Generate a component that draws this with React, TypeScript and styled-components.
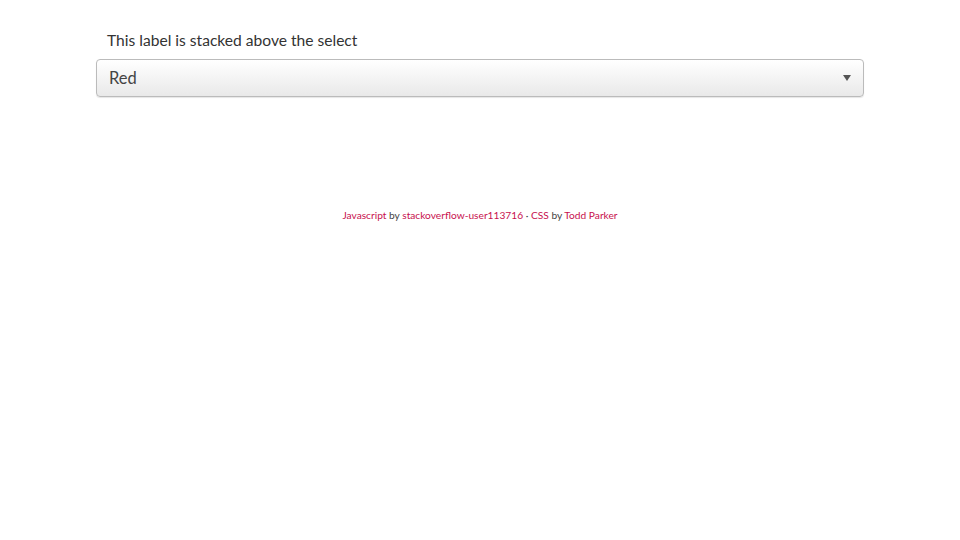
import React from "react";
import styled, { createGlobalStyle } from "styled-components";

const GlobalStyle = createGlobalStyle`
  html, body {
    margin: 0;
    padding: 0;
    background: #fff;
    font-family: Lato, "Noto Sans", sans-serif;
    color: #333;
  }
`;

const Page = styled.div`
  width: 960px;
  display: flex;
  flex-direction: column;
  align-items: center;
`;

const Field = styled.div`
  width: 768px;
  padding-top: 30px;
  display: flex;
  flex-direction: column;
`;

const Label = styled.label`
  font-size: 15.6px;
  line-height: 21px;
  color: #333;
  padding-left: 11px;
  margin-bottom: 8px;
`;

const SelectBox = styled.div`
  position: relative;
  height: 38px;
  box-sizing: border-box;
  border: 1px solid #bbb;
  border-radius: 4px;
  background: linear-gradient(#fff 0%, #e9e9e9 100%);
  box-shadow: 0 1px 1px rgba(0, 0, 0, 0.1);
`;

const Select = styled.select`
  appearance: none;
  -webkit-appearance: none;
  width: 100%;
  height: 100%;
  border: 0;
  background: transparent;
  font-family: inherit;
  font-size: 16.5px;
  color: #444;
  padding: 0 12px;
  outline: none;
`;

const Arrow = styled.span`
  position: absolute;
  right: 12px;
  top: 15px;
  width: 0;
  height: 0;
  border-left: 4px solid transparent;
  border-right: 4px solid transparent;
  border-top: 6px solid #555;
  pointer-events: none;
`;

const Credits = styled.p`
  margin: 111px 0 0;
  font-size: 10.2px;
  line-height: 14px;
  color: #444;
`;

const Link = styled.a`
  color: #c8104e;
  text-decoration: none;
`;

export default function App() {
  return (
    <Page>
      <GlobalStyle />
      <Field>
        <Label htmlFor="color">This label is stacked above the select</Label>
        <SelectBox>
          <Select id="color" defaultValue="red">
            <option value="red">Red</option>
            <option value="green">Green</option>
            <option value="blue">Blue</option>
          </Select>
          <Arrow />
        </SelectBox>
      </Field>
      <Credits>
        <Link href="#">Javascript</Link> by <Link href="#">stackoverflow-user113716</Link> ·{" "}
        <Link href="#">CSS</Link> by <Link href="#">Todd Parker</Link>
      </Credits>
    </Page>
  );
}
